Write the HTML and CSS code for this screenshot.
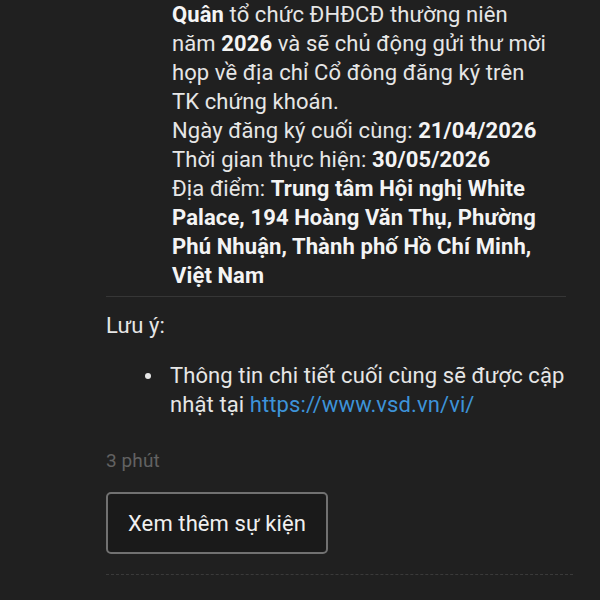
FILE: index.html
```html
<!DOCTYPE html>
<html lang="vi">
<head>
<meta charset="utf-8">
<link rel="stylesheet" href="styles.css">
</head>
<body>
<div class="feed">
  <div class="detail">
    <p class="para"><b>Quân</b> tổ chức ĐHĐCĐ thường niên năm <b>2026</b> và sẽ chủ động gửi thư mời họp về địa chỉ Cổ đông đăng ký trên TK chứng khoán.<br>Ngày đăng ký cuối cùng: <b>21/04/2026</b><br>Thời gian thực hiện: <b>30/05/2026</b><br>Địa điểm: <b>Trung tâm Hội nghị White Palace, 194 Hoàng Văn Thụ, Phường Phú Nhuận, Thành phố Hồ Chí Minh, Việt Nam</b></p>
  </div>
  <div class="divider"></div>
  <p class="note">Lưu ý:</p>
  <ul class="notes">
    <li>Thông tin chi tiết cuối cùng sẽ được cập nhật tại <a class="link" href="#">https://www.vsd.vn/vi/</a></li>
  </ul>
  <div class="time">3 phút</div>
  <button class="more">Xem thêm sự kiện</button>
  <div class="dashed"></div>
</div>
</body>
</html>
```
FILE: styles.css
```css
html, body {
  margin: 0;
  padding: 0;
  background: #202020;
}
body {
  font-family: Roboto, "Noto Sans", sans-serif;
  color: #e6e6e6;
  font-size: 22px;
  line-height: 29px;
  letter-spacing: 0.1px;
}
.feed {
  padding: 0 27px 0 106px;
}
.detail {
  padding-left: 66px;
  width: 382px;
}
.para {
  margin: 0;
}
.para b {
  font-weight: 700;
  color: #f4f4f4;
}
.divider {
  height: 1px;
  background: #363636;
  margin: 6px 7px 0 0;
}
.note {
  margin: 14px 0 0;
}
.notes {
  margin: 21px 0 0;
  padding-left: 64px;
  list-style: none;
}
.notes li {
  position: relative;
}
.notes li::before {
  content: "";
  position: absolute;
  left: -25px;
  top: 12px;
  width: 6px;
  height: 6px;
  border-radius: 50%;
  background: #e6e6e6;
}
.link {
  color: #3d93d8;
  text-decoration: none;
}
.time {
  margin-top: 30px;
  font-size: 19px;
  line-height: 24px;
  color: #626262;
}
.more {
  display: block;
  margin-top: 19px;
  height: 62px;
  padding: 0 20px;
  background: #1a1a1a;
  border: 2px solid #717171;
  border-radius: 5px;
  color: #f0f0f0;
  font-family: Roboto, "Noto Sans", sans-serif;
  font-size: 22px;
  letter-spacing: 0.1px;
}
.dashed {
  margin-top: 20px;
  border-top: 1px dashed #3a3a3a;
}
```
